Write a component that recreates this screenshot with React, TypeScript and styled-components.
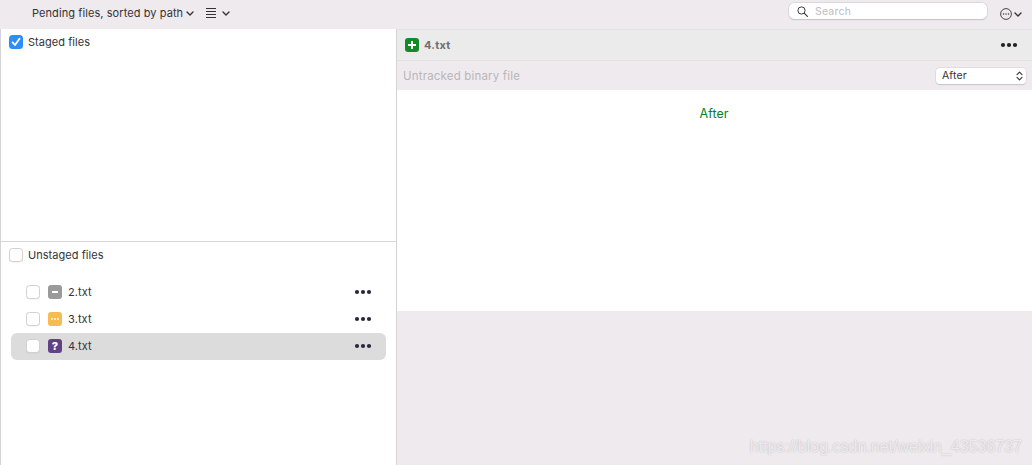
import React from "react";
import styled, { createGlobalStyle } from "styled-components";

const Global = createGlobalStyle`
  html, body { margin: 0; padding: 0; background: #efeaee; }
  body { font-family: "Inter", "Liberation Sans", sans-serif; color: #2b2b2f; overflow: hidden; }
  #root { width: 1032px; height: 465px; }
`;

const Page = styled.div`
  position: relative;
  width: 1032px;
  height: 465px;
  display: flex;
  flex-direction: column;
  background: #efeaee;
  overflow: hidden;
`;

const Toolbar = styled.header`
  height: 29px;
  flex: none;
  box-sizing: border-box;
  display: flex;
  align-items: flex-start;
  padding: 2px 10px 0 32px;
`;

const SortLabel = styled.span`
  font-size: 11px;
  line-height: 22px;
  letter-spacing: 0.08px;
  color: #333337;
`;

const Caret = styled.svg`
  display: block;
  flex: none;
`;

const SortCaretSlot = styled.span`
  margin: 9px 0 0 3px;
`;

const ListIconSlot = styled.span`
  margin: 6px 0 0 12px;
`;

const ListCaretSlot = styled.span`
  margin: 9px 0 0 6px;
`;

const SearchBox = styled.div`
  margin-left: auto;
  width: 198px;
  height: 16px;
  box-sizing: border-box;
  background: #fff;
  border-radius: 5px;
  box-shadow: 0 0 0 0.5px #c9c6c9, 0 1px 1px rgba(0, 0, 0, 0.18);
  display: flex;
  align-items: center;
  padding-left: 8px;
  gap: 7px;
  margin-top: 1px;
`;

const SearchText = styled.span`
  font-size: 10.5px;
  color: #bdbdbf;
  letter-spacing: 0.2px;
`;

const MoreGroup = styled.div`
  display: flex;
  align-items: center;
  gap: 2px;
  margin: 6px 0 0 13px;
`;

const Split = styled.main`
  flex: 1;
  display: flex;
  min-height: 0;
`;

const LeftPane = styled.section`
  width: 397px;
  flex: none;
  box-sizing: border-box;
  border-left: 1px solid #d6d3d6;
  border-right: 1px solid #d6d3d6;
  background: #fff;
  display: flex;
  flex-direction: column;
`;

const StagedArea = styled.div`
  height: 213px;
  flex: none;
  box-sizing: border-box;
  border-bottom: 1px solid #d8d6d8;
`;

const SectionRow = styled.label`
  display: flex;
  align-items: center;
  gap: 5px;
  height: 26px;
  padding-left: 8px;
  font-size: 11px;
  letter-spacing: 0.04px;
  color: #333337;
`;

const Box = styled.span<{ $checked?: boolean }>`
  width: 14px;
  height: 14px;
  flex: none;
  box-sizing: border-box;
  border-radius: 3.5px;
  display: flex;
  align-items: center;
  justify-content: center;
  background: ${(p) => (p.$checked ? "#2f8df6" : "#fff")};
  border: ${(p) => (p.$checked ? "none" : "1px solid #d2d0d2")};
  box-shadow: ${(p) => (p.$checked ? "none" : "0 0.5px 0.5px rgba(0,0,0,0.08)")};
`;

const FileList = styled.ul`
  list-style: none;
  margin: 11px 0 0;
  padding: 0 10px;
`;

const FileRow = styled.li<{ $selected?: boolean }>`
  height: 27px;
  box-sizing: border-box;
  display: flex;
  align-items: center;
  padding: 0 14px 1px 15px;
  border-radius: 6px;
  background: ${(p) => (p.$selected ? "#dcdcdc" : "transparent")};
  font-size: 11px;
  letter-spacing: 0.1px;
  color: #333337;
`;

const Status = styled.span<{ $color: string; $flush?: boolean }>`
  width: 14px;
  height: 14px;
  flex: none;
  margin: ${(p) => (p.$flush ? "0" : "0 6px 0 8px")};
  border-radius: 3px;
  background: ${(p) => p.$color};
  color: #fff;
  display: flex;
  align-items: center;
  justify-content: center;
  font-size: 11px;
  font-weight: 800;
  line-height: 14px;
`;

const RowDots = styled.span`
  margin-left: auto;
  display: flex;
`;

const RightPane = styled.section`
  flex: 1;
  min-width: 0;
  display: flex;
  flex-direction: column;
`;

const FileHeader = styled.div`
  height: 32px;
  flex: none;
  box-sizing: border-box;
  background: #ebebeb;
  border-top: 1px solid #e6e3e6;
  border-bottom: 1px solid #e3e1e3;
  display: flex;
  align-items: center;
  padding: 0 14px 0 8px;
  gap: 5px;
`;

const HeaderName = styled.span`
  font-size: 11px;
  font-weight: 700;
  letter-spacing: 0.25px;
  color: #6f6f71;
`;

const InfoBar = styled.div`
  height: 29px;
  flex: none;
  box-sizing: border-box;
  display: flex;
  align-items: center;
  justify-content: space-between;
  padding: 0 6px;
`;

const InfoText = styled.span`
  font-size: 11.5px;
  letter-spacing: 0.18px;
  color: #b9b7b9;
`;

const Select = styled.div`
  width: 90px;
  height: 16px;
  box-sizing: border-box;
  background: #fff;
  border-radius: 4px;
  box-shadow: 0 0 0 0.5px #d2d0d2, 0 1px 1px rgba(0, 0, 0, 0.2);
  display: flex;
  align-items: center;
  justify-content: space-between;
  padding: 0 3px 0 6px;
  font-size: 10.5px;
  letter-spacing: 0.1px;
  color: #333337;
`;

const Preview = styled.div`
  height: 221px;
  flex: none;
  background: #fff;
  display: flex;
  justify-content: center;
  padding: 15px 1px 0 0;
  box-sizing: border-box;
`;

const AfterLabel = styled.span`
  font-size: 12.5px;
  line-height: 17px;
  letter-spacing: 0.05px;
  color: #0b8120;
`;

const Watermark = styled.span`
  position: absolute;
  right: 10px;
  bottom: 6px;
  font-family: "Liberation Sans", Arial, sans-serif;
  font-size: 16px;
  line-height: 24px;
  color: rgba(255, 255, 255, 0.7);
  text-shadow: 0 0 1.5px rgba(90, 80, 90, 0.4);
`;

const Chevron = () => (
  <Caret width="8" height="5" viewBox="0 0 8 5" fill="none">
    <path d="M1 1 4 4 7 1" stroke="#333337" strokeWidth="1.4" strokeLinecap="round" strokeLinejoin="round" />
  </Caret>
);

const Dots = ({ color = "#26293a" }: { color?: string }) => (
  <svg width="18" height="6" viewBox="0 0 18 6" style={{ display: "block" }}>
    <circle cx="3" cy="3" r="2.1" fill={color} />
    <circle cx="9" cy="3" r="2.1" fill={color} />
    <circle cx="15" cy="3" r="2.1" fill={color} />
  </svg>
);

export default function App() {
  return (
    <Page>
      <Global />
      <Toolbar>
        <SortLabel>Pending files, sorted by path</SortLabel>
        <SortCaretSlot><Chevron /></SortCaretSlot>
        <ListIconSlot>
          <svg width="10" height="10" viewBox="0 0 10 10" style={{ display: "block" }}>
            <path d="M0 .5h10M0 3.5h10M0 6.5h10M0 9.5h10" stroke="#333337" strokeWidth="1" />
          </svg>
        </ListIconSlot>
        <ListCaretSlot><Chevron /></ListCaretSlot>
        <SearchBox>
          <svg width="11" height="11" viewBox="0 0 11 11" fill="none">
            <circle cx="4.5" cy="4.5" r="3.6" stroke="#3a3a3d" strokeWidth="1" />
            <path d="M7.2 7.2 10.4 10.4" stroke="#3a3a3d" strokeWidth="1.2" strokeLinecap="round" />
          </svg>
          <SearchText>Search</SearchText>
        </SearchBox>
        <MoreGroup>
          <svg width="12" height="12" viewBox="0 0 12 12" fill="none">
            <circle cx="6" cy="6" r="5.4" stroke="#333337" strokeWidth="0.9" />
            <circle cx="3.5" cy="6" r="0.75" fill="#333337" />
            <circle cx="6" cy="6" r="0.75" fill="#333337" />
            <circle cx="8.5" cy="6" r="0.75" fill="#333337" />
          </svg>
          <Chevron />
        </MoreGroup>
      </Toolbar>
      <Split>
        <LeftPane>
          <StagedArea>
            <SectionRow>
              <Box $checked>
                <svg width="10" height="10" viewBox="0 0 10 10" fill="none">
                  <path d="M1.6 5.4 4 8 8.5 1.8" stroke="#fff" strokeWidth="1.8" strokeLinecap="round" strokeLinejoin="round" />
                </svg>
              </Box>
              Staged files
            </SectionRow>
          </StagedArea>
          <SectionRow>
            <Box />
            Unstaged files
          </SectionRow>
          <FileList>
            <FileRow>
              <Box />
              <Status $color="#9a9a9a">
                <svg width="8" height="8" viewBox="0 0 8 8"><path d="M1 4h6" stroke="#fff" strokeWidth="2" /></svg>
              </Status>
              2.txt
              <RowDots><Dots /></RowDots>
            </FileRow>
            <FileRow>
              <Box />
              <Status $color="#f5bd4f">
                <svg width="10" height="4" viewBox="0 0 10 4">
                  <circle cx="2" cy="2" r="0.9" fill="#fff" />
                  <circle cx="5" cy="2" r="0.9" fill="#fff" />
                  <circle cx="8" cy="2" r="0.9" fill="#fff" />
                </svg>
              </Status>
              3.txt
              <RowDots><Dots /></RowDots>
            </FileRow>
            <FileRow $selected>
              <Box />
              <Status $color="#5f4186">?</Status>
              4.txt
              <RowDots><Dots /></RowDots>
            </FileRow>
          </FileList>
        </LeftPane>
        <RightPane>
          <FileHeader>
            <Status $color="#14892c" $flush>
              <svg width="10" height="10" viewBox="0 0 10 10"><path d="M5 1v8M1 5h8" stroke="#fff" strokeWidth="2" /></svg>
            </Status>
            <HeaderName>4.txt</HeaderName>
            <RowDots><Dots color="#222" /></RowDots>
          </FileHeader>
          <InfoBar>
            <InfoText>Untracked binary file</InfoText>
            <Select>
              After
              <svg width="7" height="10" viewBox="0 0 7 10" fill="none">
                <path d="M1 3.6 3.5 1.2 6 3.6M1 6.4 3.5 8.8 6 6.4" stroke="#333337" strokeWidth="1.1" strokeLinecap="round" strokeLinejoin="round" />
              </svg>
            </Select>
          </InfoBar>
          <Preview>
            <AfterLabel>After</AfterLabel>
          </Preview>
        </RightPane>
      </Split>
      <Watermark>https://blog.csdn.net/weixin_43536737</Watermark>
    </Page>
  );
}
